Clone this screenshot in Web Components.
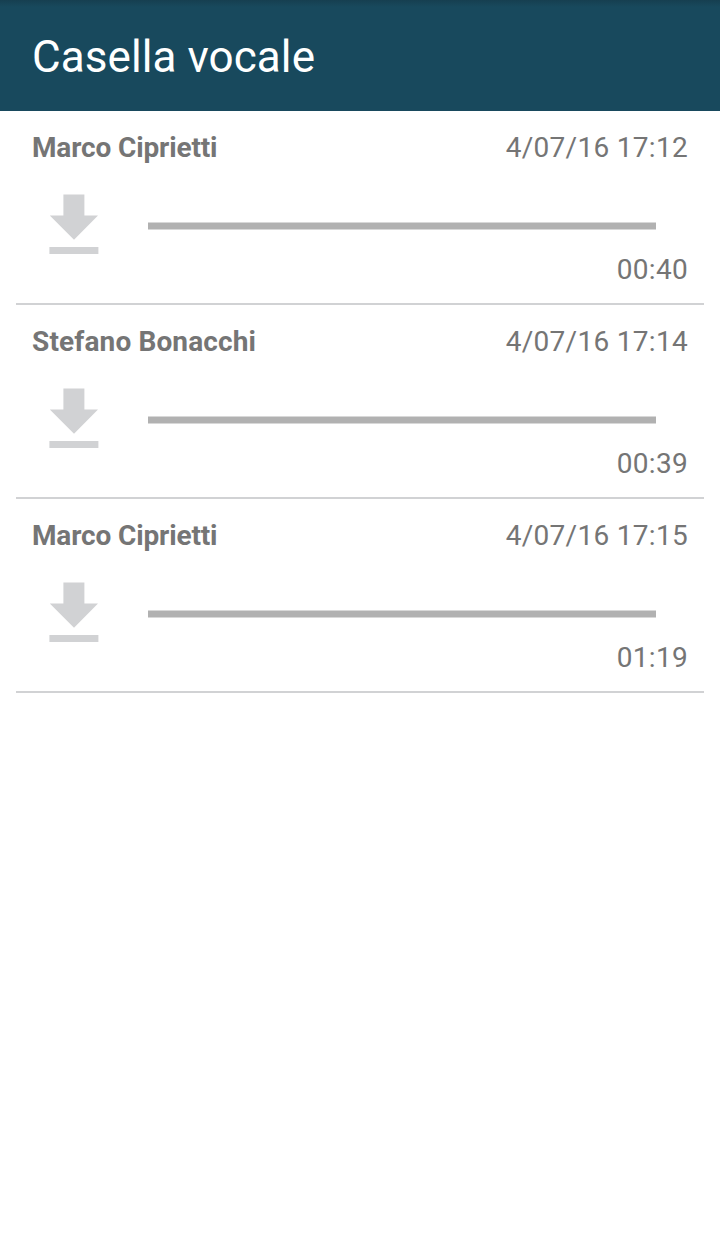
<!DOCTYPE html>
<html lang="it"><head><meta charset="utf-8"><title>Casella vocale</title>
<style>html,body{margin:0;background:#fff}body{font-family:Roboto,sans-serif}</style></head>
<body>
<app-header>Casella vocale</app-header>
<voice-list>
<voice-message name="Marco Ciprietti" date="4/07/16 17:12" duration="00:40" style="--name-spacing:-.14px"></voice-message>
<voice-message name="Stefano Bonacchi" date="4/07/16 17:14" duration="00:39" style="--name-spacing:.14px"></voice-message>
<voice-message name="Marco Ciprietti" date="4/07/16 17:15" duration="01:19" style="--name-spacing:-.14px"></voice-message>
</voice-list>
<script>
class Base extends HTMLElement{
  constructor(){super();this.attachShadow({mode:'open'});}
  connectedCallback(){this.shadowRoot.innerHTML=this.render();}
}
customElements.define('app-header',class extends Base{render(){return `
<style>:host{display:flex;align-items:center;height:111px;padding:3px 32px 0;box-sizing:border-box;background:linear-gradient(#163f50,#18495d 7px);color:#fff;font-size:44px;line-height:52px;letter-spacing:.08px}
h1{margin:0;font:inherit;white-space:nowrap}</style><h1><slot></slot></h1>`}});
customElements.define('voice-list',class extends Base{render(){return `
<style>:host{display:flex;flex-direction:column;padding:0 16px}</style><slot></slot>`}});
customElements.define('download-icon',class extends Base{render(){return `
<style>:host{display:block;width:50px;height:60px}svg{display:block}</style>
<svg width="50" height="60" viewBox="0 0 50 60" fill="#d1d2d4"><path d="M14.400 .4h21v21h13.600L25 45.800 .8 21.400h13.600z"/><path d="M.4 53h49v7H.4z"/></svg>`}});
customElements.define('voice-message',class extends Base{render(){return `
<style>:host{display:block;height:194px;box-sizing:border-box;border-bottom:2px solid #d1d2d4;padding:20px 16px 0;color:#757575;font-size:28px;line-height:33px}
.top{display:flex;justify-content:space-between}
b{font-weight:700;letter-spacing:var(--name-spacing,0)}
.top span,.time{letter-spacing:.3px}
.mid{display:flex;align-items:center;height:60px;margin-top:30px;padding:0 32px 0 17px;gap:49px}
.track{flex:1;height:6px;margin-top:4px;background:#b1b1b1;border:solid #d8d8d8;border-width:1px 0}
.time{text-align:right;margin-top:-1px}
</style><div class="top"><b>${this.getAttribute('name')}</b><span>${this.getAttribute('date')}</span></div>
<div class="mid"><download-icon></download-icon><div class="track"></div></div>
<div class="time">${this.getAttribute('duration')}</div>`}});
</script></body></html>
